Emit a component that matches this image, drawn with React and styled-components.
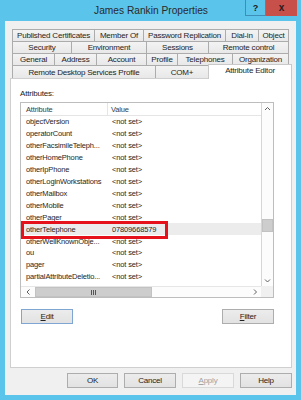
import React from "react";
import styled, { createGlobalStyle } from "styled-components";

const FONT = `"Liberation Sans", Arial, sans-serif`;

const GlobalStyle = createGlobalStyle`
  html, body {
    margin: 0;
    padding: 0;
    background: #5bc4ea;
  }
  body {
    font-family: ${FONT};
  }
`;

const TAB_ROWS = [
  [
    ["Published Certificates", 82],
    ["Member Of", 49],
    ["Password Replication", 82],
    ["Dial-in", 33],
    ["Object", 31],
  ],
  [
    ["Security", 59],
    ["Environment", 75],
    ["Sessions", 62],
    ["Remote control", 81],
  ],
  [
    ["General", 42],
    ["Address", 42],
    ["Account", 50],
    ["Profile", 31],
    ["Telephones", 55],
    ["Organization", 57],
  ],
  [
    ["Remote Desktop Services Profile", 143],
    ["COM+", 53],
    ["Attribute Editor", 84, true],
  ],
];

const NOT_SET = "<not set>";

const ATTRIBUTES = [
  ["objectVersion", NOT_SET],
  ["operatorCount", NOT_SET],
  ["otherFacsimileTeleph...", NOT_SET],
  ["otherHomePhone", NOT_SET],
  ["otherIpPhone", NOT_SET],
  ["otherLoginWorkstations", NOT_SET],
  ["otherMailbox", NOT_SET],
  ["otherMobile", NOT_SET],
  ["otherPager", NOT_SET],
  ["otherTelephone", "07809668579", true],
  ["otherWellKnownObje...", NOT_SET],
  ["ou", NOT_SET],
  ["pager", NOT_SET],
  ["partialAttributeDeletio...", NOT_SET],
];

export default function App() {
  return (
    <>
      <GlobalStyle />
      <Frame>
        <TitleBar>
          <span />
          <Title>James Rankin Properties</Title>
          <CaptionButtons>
            <HelpButton>?</HelpButton>
            <CloseButton>x</CloseButton>
          </CaptionButtons>
        </TitleBar>

        <Client>
          <Tabs>
            {TAB_ROWS.map((row, i) => (
              <TabRow key={i} $tall={i === TAB_ROWS.length - 1}>
                {row.map(([label, width, active]) => (
                  <Tab key={label} $w={width} $active={active}>
                    {label}
                  </Tab>
                ))}
              </TabRow>
            ))}
          </Tabs>

          <Page>
            <Label>Attributes:</Label>
            <ListBox>
              <ListGrid>
                <ListView>
                  <HeaderRow>
                    <HeaderCell $first>Attribute</HeaderCell>
                    <HeaderCell>Value</HeaderCell>
                  </HeaderRow>
                  {ATTRIBUTES.map(([name, value, selected]) => (
                    <Row key={name} $selected={selected}>
                      <NameCell>{name}</NameCell>
                      <ValueCell>{value}</ValueCell>
                    </Row>
                  ))}
                </ListView>

                <VScroll>
                  <ArrowBox $h>
                    <Chevron dir="up" />
                  </ArrowBox>
                  <VTrack>
                    <VThumb $offset={105} />
                  </VTrack>
                  <ArrowBox $h>
                    <Chevron dir="down" />
                  </ArrowBox>
                </VScroll>

                <HScroll>
                  <ArrowBox>
                    <Chevron dir="left" />
                  </ArrowBox>
                  <HTrack>
                    <HThumb $offset={1} $w={117}>
                      <Grip />
                    </HThumb>
                  </HTrack>
                  <ArrowBox>
                    <Chevron dir="right" />
                  </ArrowBox>
                </HScroll>

                <Corner />
              </ListGrid>
              <Callout />
            </ListBox>

            <PageButtons>
              <Button $default>
                <u>E</u>dit
              </Button>
              <Button>
                <u>F</u>ilter
              </Button>
            </PageButtons>
          </Page>

          <DialogButtons>
            <Button $w={51}>OK</Button>
            <Button>Cancel</Button>
            <Button disabled>
              <u>A</u>pply
            </Button>
            <Button>Help</Button>
          </DialogButtons>
        </Client>
      </Frame>
    </>
  );
}

function Chevron({ dir }) {
  const pts = {
    up: "1,4 3.5,1.5 6,4",
    down: "1,1.5 3.5,4 6,1.5",
    left: "4.5,0.5 2,3 4.5,5.5",
    right: "2,0.5 4.5,3 2,5.5",
  }[dir];
  const horizontal = dir === "left" || dir === "right";
  return (
    <svg
      width={horizontal ? 6 : 7}
      height={horizontal ? 6 : 5}
      viewBox={horizontal ? "0 0 6 6" : "0 0 7 5"}
    >
      <polyline points={pts} fill="none" stroke="#606060" strokeWidth="1" />
    </svg>
  );
}

function Grip() {
  return (
    <svg width="6" height="5" viewBox="0 0 6 5">
      <path d="M0.5 0v5M2.5 0v5M4.5 0v5" stroke="#555" strokeWidth="1" />
    </svg>
  );
}

const Frame = styled.div`
  width: 301px;
  height: 400px;
  box-sizing: border-box;
  display: flex;
  flex-direction: column;
  background: #5bc4ea;
  padding-bottom: 5px;
  overflow: hidden;
`;

const TitleBar = styled.div`
  height: 21px;
  flex: 0 0 auto;
  display: grid;
  grid-template-columns: 57px 1fr 52px;
  padding-right: 4px;
`;

const Title = styled.div`
  align-self: center;
  text-align: center;
  font-size: 10.2px;
  color: #2a2a2a;
  white-space: nowrap;
`;

const CaptionButtons = styled.div`
  display: flex;
  height: 16px;
`;

const HelpButton = styled.div`
  box-sizing: border-box;
  width: 21px;
  display: flex;
  align-items: center;
  justify-content: center;
  border: 1px solid #3d8fb7;
  border-top: none;
  font-size: 9px;
  font-weight: bold;
  color: #1a1a1a;
`;

const CloseButton = styled.div`
  width: 31px;
  display: flex;
  align-items: center;
  justify-content: center;
  background: #c7504b;
  font-size: 10px;
  font-weight: bold;
  color: #2a1a1a;
  padding-bottom: 2px;
  box-sizing: border-box;
`;

const Client = styled.div`
  flex: 1;
  margin: 0 5px;
  background: #f0f0f0;
  display: flex;
  flex-direction: column;
  padding: 8px 4px 7px 5px;
`;

const Tabs = styled.div`
  margin: 0 0 0 2px;
  display: flex;
  flex-direction: column;
  position: relative;
  z-index: 2;
`;

const TabRow = styled.div`
  display: flex;
  height: ${(p) => (p.$tall ? 13 : 12)}px;
`;

const Tab = styled.div`
  box-sizing: border-box;
  flex: 0 0 ${(p) => p.$w}px;
  display: flex;
  align-items: center;
  justify-content: center;
  white-space: nowrap;
  overflow: hidden;
  border: 1px solid #acacac;
  border-bottom: none;
  border-right: none;
  &:last-child {
    border-right: 1px solid #acacac;
  }
  background: ${(p) =>
    p.$active ? "#ffffff" : "linear-gradient(#f3f3f3, #e8e8e8)"};
  font-size: 8px;
  letter-spacing: -0.2px;
  color: #1e1e1e;
  ${(p) =>
    p.$active &&
    `
    align-self: flex-start;
    height: 15px;
    margin-top: -1px;
    border-color: #c9c9c9;
    &:last-child { border-right-color: #c9c9c9; }
    padding-bottom: 3px;
  `}
`;

const Page = styled.div`
  height: 290px;
  box-sizing: border-box;
  background: #ffffff;
  border: 1px solid #cfcfcf;
  padding: 10px 17px 0 9px;
  display: flex;
  flex-direction: column;
`;

const Label = styled.div`
  height: 10px;
  line-height: 10px;
  margin-bottom: 3px;
  font-size: 8px;
  letter-spacing: -0.2px;
  color: #222;
`;

const ListBox = styled.div`
  position: relative;
  height: 196px;
  box-sizing: border-box;
  border: 1px solid #bdbdbd;
`;

const ListGrid = styled.div`
  height: 100%;
  display: grid;
  grid-template-columns: 1fr 12px;
  grid-template-rows: 1fr 11px;
`;

const ListView = styled.div`
  overflow: hidden;
  min-width: 0;
`;

const HeaderRow = styled.div`
  display: grid;
  grid-template-columns: 87px 1fr;
  height: 13px;
  box-sizing: border-box;
  border-bottom: 1px solid #e5e5e5;
`;

const HeaderCell = styled.div`
  display: flex;
  align-items: center;
  padding-left: ${(p) => (p.$first ? 5 : 3)}px;
  border-right: ${(p) => (p.$first ? "1px solid #e5e5e5" : "none")};
  font-size: 7.5px;
  letter-spacing: -0.15px;
  color: #3c3c3c;
  white-space: nowrap;
`;

const Row = styled.div`
  display: grid;
  grid-template-columns: 87px 1fr;
  height: 11.92px;
  align-items: center;
  background: ${(p) => (p.$selected ? "#ececec" : "transparent")};
  font-size: 7.5px;
  letter-spacing: -0.15px;
  color: #262626;
  white-space: nowrap;
`;

const NameCell = styled.div`
  padding-left: 5px;
  overflow: hidden;
`;

const ValueCell = styled.div`
  padding-left: 4px;
`;

const VScroll = styled.div`
  grid-column: 2;
  grid-row: 1;
  display: flex;
  flex-direction: column;
  box-sizing: border-box;
  border-left: 1px solid #d6d6d6;
  background: #fcfcfc;
`;

const ArrowBox = styled.div`
  flex: 0 0 ${(p) => (p.$h ? "11px" : "13px")};
  display: flex;
  align-items: center;
  justify-content: center;
`;

const VTrack = styled.div`
  flex: 1;
`;

const VThumb = styled.div`
  margin-top: ${(p) => p.$offset}px;
  height: 13px;
  box-sizing: border-box;
  background: #cdcdcd;
  border: 1px solid #c2c2c2;
`;

const HScroll = styled.div`
  grid-column: 1;
  grid-row: 2;
  display: flex;
  box-sizing: border-box;
  border-top: 1px solid #e6e6e6;
  background: #fcfcfc;
`;

const HTrack = styled.div`
  flex: 1;
  display: flex;
  align-items: stretch;
`;

const HThumb = styled.div`
  margin-left: ${(p) => p.$offset}px;
  width: ${(p) => p.$w}px;
  box-sizing: border-box;
  background: #cdcdcd;
  border: 1px solid #c2c2c2;
  display: flex;
  align-items: center;
  justify-content: center;
`;

const Corner = styled.div`
  grid-column: 2;
  grid-row: 2;
  background: #f0f0f0;
`;

const Callout = styled.div`
  position: absolute;
  left: 0;
  top: 118px;
  width: 147px;
  height: 18px;
  box-sizing: border-box;
  border: 3px solid #e5121b;
  pointer-events: none;
`;

const PageButtons = styled.div`
  display: flex;
  justify-content: space-between;
  margin-top: 11px;
  padding-left: 1px;
`;

const Button = styled.button`
  box-sizing: border-box;
  width: ${(p) => p.$w || 52}px;
  height: 15px;
  padding: 0;
  border: 1px solid
    ${(p) => (p.$default ? "#7fa6d3" : p.disabled ? "#d9d9d9" : "#adadad")};
  background: ${(p) =>
    p.disabled ? "#f4f4f4" : "linear-gradient(#ececec, #e2e2e2)"};
  font-family: ${FONT};
  font-size: 8px;
  letter-spacing: -0.2px;
  color: ${(p) => (p.disabled ? "#a3a3a3" : "#222")};
  line-height: 13px;
  u {
    text-decoration-thickness: 1px;
    text-underline-offset: 1px;
  }
`;

const DialogButtons = styled.div`
  display: flex;
  justify-content: flex-end;
  gap: 6px;
  margin-top: 5px;
`;
